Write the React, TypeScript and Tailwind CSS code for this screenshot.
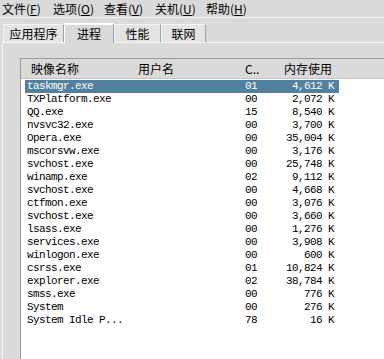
const procs: [string, string, string][] = [
  ["taskmgr.exe", "01", "4,612 K"],
  ["TXPlatform.exe", "00", "2,072 K"],
  ["QQ.exe", "15", "8,540 K"],
  ["nvsvc32.exe", "00", "3,700 K"],
  ["Opera.exe", "00", "35,004 K"],
  ["mscorsvw.exe", "00", "3,176 K"],
  ["svchost.exe", "00", "25,748 K"],
  ["winamp.exe", "02", "9,112 K"],
  ["svchost.exe", "00", "4,668 K"],
  ["ctfmon.exe", "00", "3,076 K"],
  ["svchost.exe", "00", "3,660 K"],
  ["lsass.exe", "00", "1,276 K"],
  ["services.exe", "00", "3,908 K"],
  ["winlogon.exe", "00", "600 K"],
  ["csrss.exe", "01", "10,824 K"],
  ["explorer.exe", "02", "38,784 K"],
  ["smss.exe", "00", "776 K"],
  ["System", "00", "276 K"],
  ["System Idle P...", "78", "16 K"],
];

const cjk = "font-['Noto_Sans_CJK_SC',sans-serif]";
const mono = "font-['Liberation_Mono',monospace] text-[11px] tracking-[-0.6px]";

const menus = [
  ["文件", "F"],
  ["选项", "O"],
  ["查看", "V"],
  ["关机", "U"],
  ["帮助", "H"],
];

const App = () => {
  return (
    <div className={`w-[384px] h-[359px] overflow-hidden bg-[#dadada] text-black ${cjk}`}>
      {/* menu bar */}
      <div className="h-[18px] flex items-center border-b border-[#f4f4f4] pl-[2px] text-[12px] leading-none">
        {menus.map(([t, k]) => (
          <span key={k} className="w-[51px] whitespace-nowrap">
            {t}(<span className="underline">{k}</span>)
          </span>
        ))}
      </div>

      {/* tabs */}
      <div className="flex items-end h-[24px] pl-[3px] text-[12px] leading-none">
        <div className="w-[61px] h-[18px] flex items-center justify-center border-t border-l border-r border-[#f4f4f4] border-r-[#a0a0a0] bg-[#e4e4e4]">
          应用程序
        </div>
        <div className="w-[50px] h-[20px] flex items-center justify-center border-t-2 border-l border-r border-[#ffffff] border-r-[#a0a0a0] bg-[#dadada] -mb-px relative">
          进程
        </div>
        <div className="w-[47px] h-[18px] flex items-center justify-center border-t border-l border-r border-[#f4f4f4] border-r-[#a0a0a0] bg-[#e4e4e4]">
          性能
        </div>
        <div className="w-[45px] h-[18px] flex items-center justify-center border-t border-l border-r border-[#f4f4f4] border-r-[#a0a0a0] bg-[#e4e4e4]">
          联网
        </div>
      </div>

      {/* tab panel */}
      <div className="ml-[2px] border-l border-t border-[#f4f4f4] pl-[17px] pt-[15px] h-full">
        <div className="border-l border-t border-[#9a9a9a] bg-white h-full">
          <div className="h-[20px] flex items-center bg-[#dadada] border-b border-[#c4c4c4] text-[12px] leading-none">
            <span className="w-[117px] pl-[10px]">映像名称</span>
            <span className="w-[107px]">用户名</span>
            <span className="w-[39px]">C..</span>
            <span>内存使用</span>
          </div>
          <div className={`pl-[4px] pt-[1px] ${mono}`}>
            {procs.map(([name, cpu, mem], i) => (
              <div
                key={i}
                className={`w-[314px] h-[13px] flex items-center leading-none ${
                  i === 0 ? "bg-[#52809f] text-white" : ""
                }`}
              >
                <span className="w-[220px] pl-[2px] whitespace-pre">{name}</span>
                <span className="w-[40px]">{cpu}</span>
                <span className="flex-1 text-right pr-[5px] whitespace-pre">{mem}</span>
              </div>
            ))}
          </div>
        </div>
      </div>
    </div>
  );
};

export default App;
